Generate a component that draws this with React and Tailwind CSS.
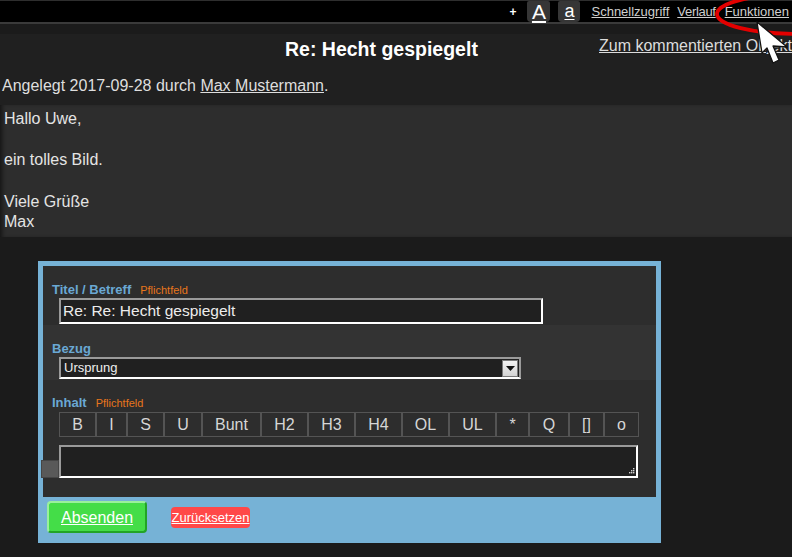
import React from 'react';

const tools = [
  ['B', 37], ['I', 31], ['S', 37], ['U', 38], ['Bunt', 59], ['H2', 47], ['H3', 47],
  ['H4', 47], ['OL', 47], ['UL', 47], ['*', 33], ['Q', 40], ['[]', 35], ['o', 35],
];

export default function App() {
  return (
    <div className="relative w-[792px] h-[557px] overflow-hidden bg-[#1b1b1b] text-[#e2e2e2] font-['Liberation_Sans',Arial,sans-serif]">
      {/* top bar */}
      <div className="h-[22px] bg-black border-t border-[#2e2e2e] flex items-center justify-end pr-[3px] text-[13px]">
        <span className="text-white font-bold text-[12px] mr-[11px]">+</span>
        <span className="w-[23px] h-[21px] -mt-[1px] rounded-b-[4px] rounded-t-[2px] bg-[#363636] flex items-center justify-center text-[21px] leading-none text-white underline underline-offset-2 mr-[8px]">A</span>
        <span className="w-[22px] h-[21px] -mt-[1px] rounded-b-[4px] rounded-t-[2px] bg-[#363636] flex items-center justify-center text-[18px] leading-none text-white underline underline-offset-2 mr-[11px]">a</span>
        <a className="text-[#cfcfcf] underline mr-[8px]">Schnellzugriff</a>
        <a className="text-[#cfcfcf] underline mr-[9px] tracking-[-0.3px]">Verlauf</a>
        <a className="text-[#cfcfcf] underline">Funktionen</a>
      </div>
      <div className="h-[2px] bg-[#3a3a3a]" />
      <div className="h-[10px] bg-[#1b1b1b]" />

      {/* header */}
      <div className="bg-[#202020] h-[71px]">
        <div className="flex items-start h-[42px] whitespace-nowrap">
          <h1 className="w-[599px] shrink-0 pl-[285px] pt-[4px] text-[19.5px] leading-[22px] font-bold text-white">Re: Hecht gespiegelt</h1>
          <a className="text-[16px] leading-[20px] pt-[2px] text-[#dcdcdc] underline">Zum kommentierten Objekt</a>
        </div>
        <p className="pl-[2px] text-[16px] leading-[20px] text-[#dedede]">
          Angelegt 2017-09-28 durch <a className="underline">Max Mustermann</a>.
        </p>
      </div>

      {/* message */}
      <div className="bg-[#2d2d2d] h-[132px] pl-[4px] pt-[4px] text-[16px] leading-[20px] text-[#e4e4e4] shadow-[inset_4px_0_4px_-2px_rgba(0,0,0,0.55)]">
        <div>Hallo Uwe,</div>
        <div className="h-[21px]" />
        <div>ein tolles Bild.</div>
        <div className="h-[22px]" />
        <div>Viele Grüße</div>
        <div>Max</div>
      </div>

      {/* form */}
      <div className="mt-[24px] ml-[38px] w-[623px] bg-[#76b2d6] px-[5px] pt-[5px] pb-[10px]">
        <div className="bg-[#2d2d2d] h-[59px] pt-[16px]">
          <div className="pl-[9px] flex items-baseline text-[13px] leading-[16px]">
            <span className="font-bold text-[#6aa8d4]">Titel / Betreff</span>
            <span className="ml-[9px] text-[11px] text-[#e8761c]">Pflichtfeld</span>
          </div>
          <div className="ml-[16px] w-[484px] h-[26px] bg-[#202020] border-2 border-t-[#9a9a9a] border-l-[#9a9a9a] border-b-white border-r-white pl-[2px] text-[15.5px] leading-[22px] text-[#ececec]">
            Re: Re: Hecht gespiegelt
          </div>
        </div>

        <div className="bg-[#333333] h-[55px] pt-[16px]">
          <div className="pl-[9px] text-[13px] leading-[16px] font-bold text-[#6aa8d4]">Bezug</div>
          <div className="ml-[16px] w-[462px] h-[22px] bg-[#202020] border-2 border-t-[#9a9a9a] border-l-[#9a9a9a] border-b-white border-r-[#9a9a9a] flex items-center justify-between">
            <span className="pl-[3px] text-[13px] text-[#eeeeee]">Ursprung</span>
            <span className="w-[16px] h-[17px] mr-[1px] bg-gradient-to-b from-[#f2f2f2] to-[#d4d4d4] border border-[#7a7a7a] flex items-center justify-center">
              <svg width="9" height="5" viewBox="0 0 9 5"><path d="M0 0h9L4.5 5z" fill="#111" /></svg>
            </span>
          </div>
        </div>

        <div className="bg-[#2d2d2d] h-[117px] pt-[15px]">
          <div className="pl-[9px] flex items-baseline text-[13px] leading-[16px]">
            <span className="font-bold text-[#6aa8d4]">Inhalt</span>
            <span className="ml-[9px] text-[11px] text-[#e8761c]">Pflichtfeld</span>
          </div>
          <div className="ml-[16px] mt-[1px] flex">
            {tools.map(([t, w]) => (
              <div key={t} style={{ width: w }} className="h-[25px] border border-[#545454] flex items-center justify-center text-[16px] text-[#d6d6d6]">
                {t}
              </div>
            ))}
          </div>
          <div className="mt-[8px] flex items-end">
            <div className="-ml-[2px] w-[18px] h-[18px] bg-[#595959] border border-[#454545]" />
            <div className="relative w-[579px] h-[33px] bg-[#202020] border-2 border-t-[#9a9a9a] border-l-[#9a9a9a] border-b-white border-r-white">
              <svg className="absolute right-[1px] bottom-[1px]" width="7" height="7" viewBox="0 0 7 7" fill="#cfcfcf">
                <rect x="5" y="0" width="1.4" height="1.4" />
                <rect x="3" y="2" width="1.4" height="1.4" />
                <rect x="5" y="2" width="1.4" height="1.4" />
                <rect x="1" y="4" width="1.4" height="1.4" />
                <rect x="3" y="4" width="1.4" height="1.4" />
                <rect x="5" y="4" width="1.4" height="1.4" />
              </svg>
            </div>
          </div>
        </div>

        <div className="flex items-center pt-[4px] pl-[4px]">
          <button className="w-[100px] h-[32px] rounded-[4px] bg-[#44dd48] border-2 border-t-[#9af09c] border-l-[#9af09c] border-b-[#22a426] border-r-[#22a426] text-white text-[16px] underline pt-[1px]">
            Absenden
          </button>
          <button className="ml-[24px] w-[79px] h-[21px] rounded-[4px] bg-[#ff4848] text-white text-[13px] leading-none underline">
            Zurücksetzen
          </button>
        </div>
      </div>

      {/* annotation overlay */}
      <svg className="absolute left-[700px] top-0 pointer-events-none" width="92" height="70" viewBox="700 0 92 70">
        <ellipse cx="798" cy="14" rx="81" ry="20" fill="none" stroke="#e30000" strokeWidth="3.8" />
        <path d="M757 22 L762 53 L767 48 L773 63 L779 60 L773 46 L787 47 Z" fill="#fff" stroke="#111" strokeWidth="1.3" strokeLinejoin="round" />
      </svg>
    </div>
  );
}
